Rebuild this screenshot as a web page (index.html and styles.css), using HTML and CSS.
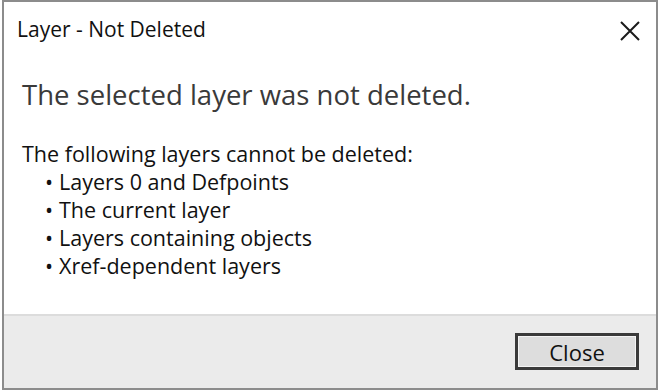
FILE: index.html
```html
<!DOCTYPE html>
<html>
<head>
<meta charset="utf-8">
<link rel="stylesheet" href="styles.css">
</head>
<body>
<div class="window">
  <div class="titlebar">
    <span class="title">Layer - Not Deleted</span>
    <svg class="close-x" width="20" height="20" viewBox="0 0 20 20"><path d="M1 1 L19 19 M19 1 L1 19" stroke="#1a1a1a" stroke-width="2" fill="none"/></svg>
  </div>
  <div class="content">
    <h1 class="main">The selected layer was not deleted.</h1>
    <p class="lead">The following layers cannot be deleted:</p>
    <ul class="list">
      <li>Layers 0 and Defpoints</li>
      <li>The current layer</li>
      <li>Layers containing objects</li>
      <li>Xref-dependent layers</li>
    </ul>
  </div>
  <div class="footer">
    <button class="btn">Close</button>
  </div>
</div>
</body>
</html>
```
FILE: styles.css
```css
html, body {
  margin: 0;
  padding: 0;
  background: #ffffff;
}
body {
  width: 660px;
  height: 392px;
  overflow: hidden;
  font-family: "Open Sans", "Noto Sans", sans-serif;
}
.window {
  box-sizing: border-box;
  margin-left: 2px;
  width: 656px;
  height: 390px;
  border: 2px solid #8c8c8c;
  display: flex;
  flex-direction: column;
  background: #fff;
}
.titlebar {
  height: 58px;
  display: flex;
  align-items: flex-start;
  justify-content: space-between;
  padding: 13px 16px 0 13px;
  box-sizing: border-box;
}
.title {
  font-size: 21px;
  color: #111;
}
.close-x {
  margin-top: 6px;
}
.content {
  flex: 1;
  padding: 0 0 0 18px;
}
.main {
  margin: 17px 0 0 0;
  font-size: 27.5px;
  font-weight: 400;
  color: #3a3a3a;
  line-height: 36px;
}
.lead {
  margin: 27px 0 0 0;
  font-size: 21.5px;
  line-height: 28px;
  color: #111;
}
.list {
  margin: 0;
  padding: 0 0 0 23px;
  list-style: none;
  font-size: 21.5px;
  line-height: 28px;
  color: #111;
}
.list li::before {
  content: "•";
  display: inline-block;
  width: 14px;
}
.footer {
  height: 74px;
  background: #ebebeb;
  border-top: 2px solid #dcdcdc;
  display: flex;
  justify-content: flex-end;
  align-items: flex-start;
  padding: 17px 17px 0 0;
  box-sizing: border-box;
}
.btn {
  width: 124px;
  height: 37px;
  box-sizing: border-box;
  border: 3px solid #3a3a3a;
  box-shadow: inset 0 0 0 1px #f4f4f4;
  background: #dddddd;
  font-family: "Open Sans", "Noto Sans", sans-serif;
  font-size: 22px;
  line-height: 28px;
  color: #111;
  padding: 0;
}
```
